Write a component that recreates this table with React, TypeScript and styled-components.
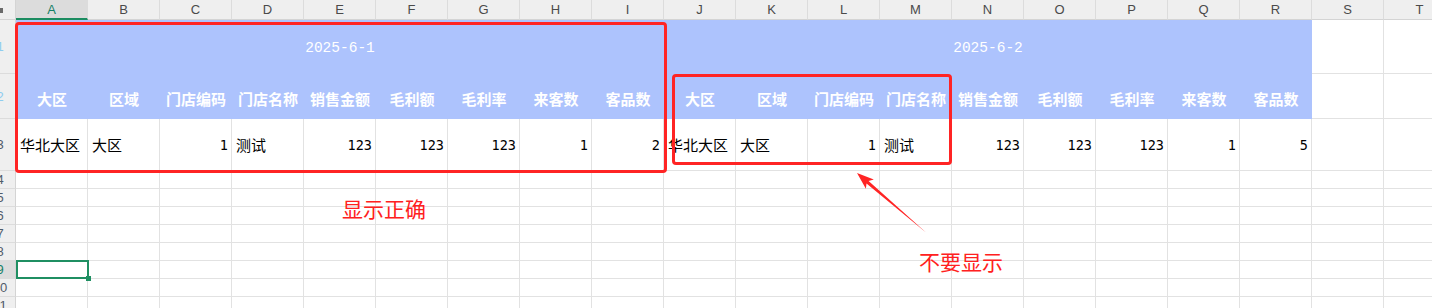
import React from 'react';
import styled, {createGlobalStyle, css} from 'styled-components';

const GlobalStyle = createGlobalStyle`
  body {
    margin: 0;
    background: #ffffff;
    overflow: hidden;
  }
`;

const Frame = styled.div`
  position: relative;
  width: 1432px;
  height: 308px;
  overflow: hidden;
  background: #ffffff;
`;

const Sheet = styled.div`
  display: grid;
  grid-template-columns: 16px repeat(20, 72px);
  grid-template-rows: 20px 54px 45px 52px repeat(8, 18px);
  font-family: "Noto Sans CJK SC", "Liberation Sans", sans-serif;
`;

const Corner = styled.div`
  position: relative;
  background: #efefef;
  border-right: 1px solid #d4d4d4;
  border-bottom: 1px solid #d4d4d4;
  box-sizing: border-box;

  &::after {
    content: '';
    position: absolute;
    left: 0;
    top: 8px;
    width: 3px;
    height: 5px;
    background: #6a6a6a;
  }
`;

const ColHeader = styled.div<{$active?: boolean}>`
  display: flex;
  align-items: center;
  justify-content: center;
  box-sizing: border-box;
  background: #efefef;
  border-right: 1px solid #dcdcdc;
  border-bottom: 1px solid #d4d4d4;
  font-family: "Liberation Sans", Arial, sans-serif;
  font-size: 13px;
  color: #4a4a4a;

  ${p => p.$active && css`
    background: #dcdcdc;
    color: #178066;
    border-bottom: 2px solid #1b8c60;
  `}
`;

const RowHeader = styled.div<{$active?: boolean; $tint?: boolean}>`
  display: flex;
  align-items: center;
  overflow: hidden;
  box-sizing: border-box;
  background: ${p => (p.$active ? '#dcdcdc' : '#efefef')};
  border-right: 1px solid #d4d4d4;
  border-bottom: 1px solid #dcdcdc;
  font-family: "Liberation Sans", Arial, sans-serif;
  font-size: 13px;
  color: ${p => (p.$active ? '#178066' : p.$tint ? '#8fcdef' : '#4f5b6a')};
`;

const RowNum = styled.span`
  display: block;
  flex: none;
  width: 32px;
  margin-left: -16px;
  text-align: center;
`;

const Cell = styled.div<{$align?: 'left' | 'right' | 'center'; $mono?: boolean; $selected?: boolean}>`
  display: flex;
  align-items: center;
  justify-content: ${p => (p.$align === 'right' ? 'flex-end' : p.$align === 'center' ? 'center' : 'flex-start')};
  box-sizing: border-box;
  padding: 0 3px 0 4px;
  border-right: 1px solid #e2e2e2;
  border-bottom: 1px solid #e2e2e2;
  white-space: nowrap;
  color: #000000;
  font-size: ${p => (p.$mono ? '13.5px' : '15px')};
  font-family: ${p => (p.$mono ? '"DejaVu Sans Mono", "Liberation Mono", monospace' : '"Noto Sans CJK SC", sans-serif')};
  -webkit-font-smoothing: antialiased;

  ${p => p.$selected && css`
    position: relative;
    z-index: 2;

    &::after {
      content: '';
      position: absolute;
      left: 0;
      top: -1px;
      right: -2px;
      bottom: -1px;
      border: 2px solid #1f8f62;
    }

    &::before {
      content: '';
      position: absolute;
      right: -4px;
      bottom: -3px;
      width: 5px;
      height: 5px;
      background: #1f8f62;
      z-index: 3;
    }
  `}
`;

const TitleCell = styled.div`
  grid-column: span 9;
  display: flex;
  align-items: center;
  justify-content: center;
  padding-top: 2px;
  box-sizing: border-box;
  background: #adc3fd;
  color: #ffffff;
  font-family: "Liberation Mono", monospace;
  font-size: 14.5px;
`;

const HeadCell = styled.div`
  display: flex;
  align-items: center;
  justify-content: center;
  padding-top: 3px;
  box-sizing: border-box;
  background: #adc3fd;
  color: #ffffff;
  font-size: 15px;
  font-weight: 700;
  white-space: nowrap;
`;

const RedBox = styled.div<{$x: number; $y: number; $w: number; $h: number}>`
  position: absolute;
  left: ${p => p.$x}px;
  top: ${p => p.$y}px;
  width: ${p => p.$w}px;
  height: ${p => p.$h}px;
  box-sizing: border-box;
  border: 3px solid #ff2424;
  border-radius: 4px;
  pointer-events: none;
  z-index: 5;
`;

const Note = styled.span<{$x: number; $y: number}>`
  position: absolute;
  left: ${p => p.$x}px;
  top: ${p => p.$y}px;
  font-family: "Noto Sans CJK SC", sans-serif;
  font-size: 21px;
  line-height: 1;
  color: #ff2020;
  z-index: 5;
`;

const ArrowSvg = styled.svg`
  position: absolute;
  left: 850px;
  top: 165px;
  z-index: 5;
`;

const COLS = 'ABCDEFGHIJKLMNOPQRST'.split('');
const HEADS = ['大区', '区域', '门店编码', '门店名称', '销售金额', '毛利额', '毛利率', '来客数', '客品数'];

type Datum = {text: string; num?: boolean};
const rowData = (last: string): Datum[] => [
  {text: '华北大区'},
  {text: '大区'},
  {text: '1', num: true},
  {text: '测试'},
  {text: '123', num: true},
  {text: '123', num: true},
  {text: '123', num: true},
  {text: '1', num: true},
  {text: last, num: true},
];

const DATA = [...rowData('2'), ...rowData('5')];

export default function App() {
  const emptyRows = [4, 5, 6, 7, 8, 9, 10, 11];

  return (
    <Frame>
      <GlobalStyle/>
      <Sheet>
        <Corner/>
        {COLS.map(c => <ColHeader key={c} $active={c === 'A'}>{c}</ColHeader>)}

        <RowHeader $tint><RowNum>1</RowNum></RowHeader>
        <TitleCell>2025-6-1</TitleCell>
        <TitleCell>2025-6-2</TitleCell>
        <Cell/>
        <Cell/>

        <RowHeader $tint><RowNum>2</RowNum></RowHeader>
        {[...HEADS, ...HEADS].map((h, i) => <HeadCell key={i}>{h}</HeadCell>)}
        <Cell/>
        <Cell/>

        <RowHeader><RowNum>3</RowNum></RowHeader>
        {DATA.map((d, i) => (
          <Cell key={i} $align={d.num ? 'right' : 'left'} $mono={d.num}>{d.text}</Cell>
        ))}
        <Cell/>
        <Cell/>

        {emptyRows.map(r => (
          <React.Fragment key={r}>
            <RowHeader $active={r === 9}><RowNum>{r}</RowNum></RowHeader>
            {COLS.map(c => <Cell key={c} $selected={r === 9 && c === 'A'}/>)}
          </React.Fragment>
        ))}
      </Sheet>

      <RedBox $x={15} $y={22} $w={652} $h={151}/>
      <RedBox $x={672} $y={74} $w={280} $h={91}/>

      <Note $x={342} $y={198}>显示正确</Note>
      <Note $x={919} $y={251}>不要显示</Note>

      <ArrowSvg width="84" height="72" viewBox="0 0 84 72">
        <polygon
          points="7,8 15.9,23.7 16.5,18.4 76.3,67.7 18.6,16 23.8,14.6"
          fill="#ff2424"
        />
      </ArrowSvg>
    </Frame>
  );
}
